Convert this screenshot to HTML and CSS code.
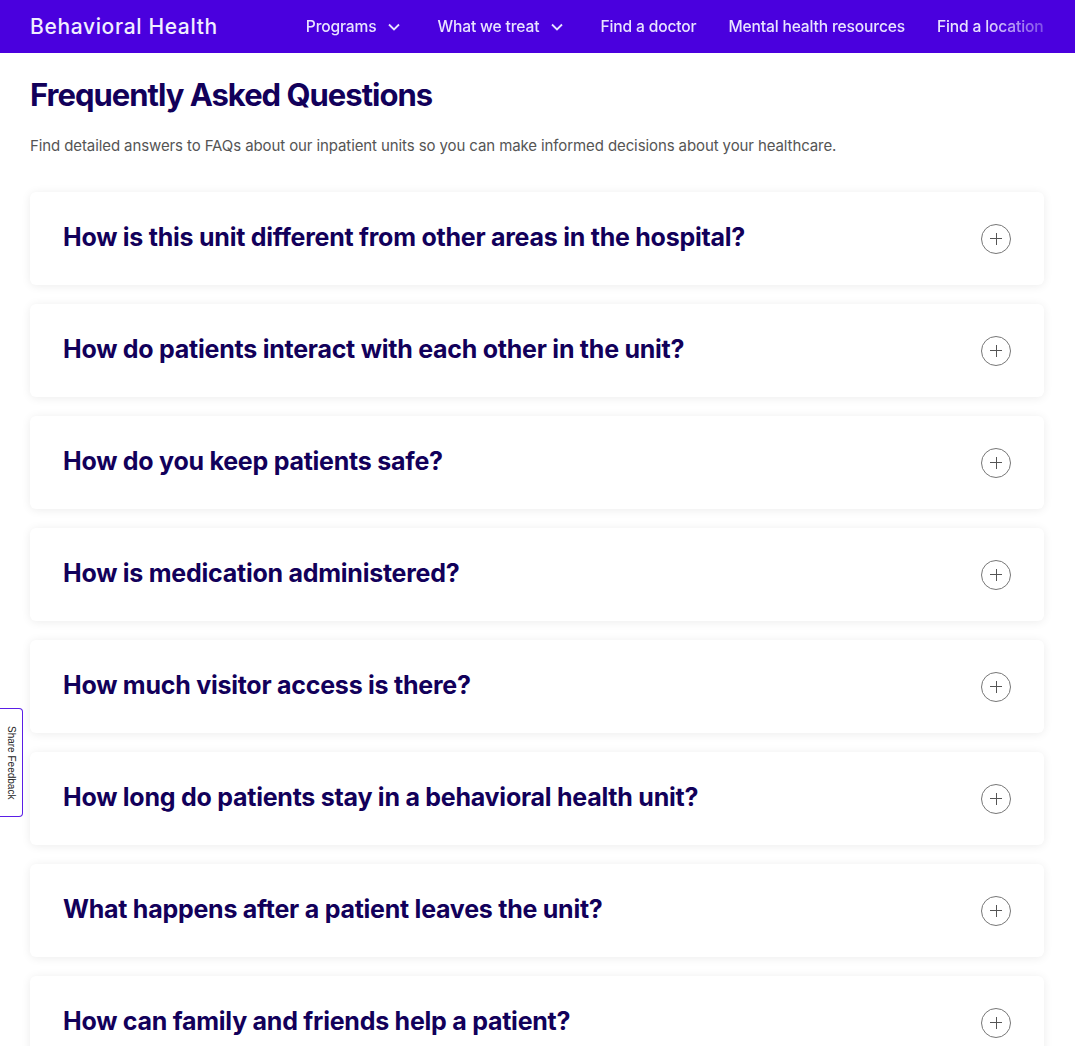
FILE: index.html
```html
<!DOCTYPE html>
<html lang="en">
<head>
    <meta charset="UTF-8">
    <meta name="viewport" content="width=device-width, initial-scale=1.0">
    <title>Behavioral Health - FAQ</title>
    <link rel="stylesheet" href="styles.css">
</head>
<body>
    <!-- Top bar -->
    <header class="topbar">
        <a class="brand" href="#">Behavioral Health</a>
        <nav class="nav">
            <a href="#" class="nav-item">Programs
                <svg class="chev" viewBox="0 0 14 14" width="14" height="14"><path d="M2 4.5l5 5 5-5" fill="none" stroke="currentColor" stroke-width="1.8"/></svg>
            </a>
            <a href="#" class="nav-item">What we treat
                <svg class="chev" viewBox="0 0 14 14" width="14" height="14"><path d="M2 4.5l5 5 5-5" fill="none" stroke="currentColor" stroke-width="1.8"/></svg>
            </a>
            <a href="#" class="nav-item">Find a doctor</a>
            <a href="#" class="nav-item">Mental health resources</a>
            <a href="#" class="nav-item">Find a location</a>
        </nav>
    </header>

    <main class="faq">
        <h1>Frequently Asked Questions</h1>
        <p class="intro">Find detailed answers to FAQs about our inpatient units so you can make informed decisions about your healthcare.</p>

        <div class="faq-list">
            <div class="faq-item">
                <h3>How is this unit different from other areas in the hospital?</h3>
                <span class="toggle"></span>
            </div>
            <div class="faq-item">
                <h3>How do patients interact with each other in the unit?</h3>
                <span class="toggle"></span>
            </div>
            <div class="faq-item">
                <h3>How do you keep patients safe?</h3>
                <span class="toggle"></span>
            </div>
            <div class="faq-item">
                <h3>How is medication administered?</h3>
                <span class="toggle"></span>
            </div>
            <div class="faq-item">
                <h3>How much visitor access is there?</h3>
                <span class="toggle"></span>
            </div>
            <div class="faq-item">
                <h3>How long do patients stay in a behavioral health unit?</h3>
                <span class="toggle"></span>
            </div>
            <div class="faq-item">
                <h3>What happens after a patient leaves the unit?</h3>
                <span class="toggle"></span>
            </div>
            <div class="faq-item">
                <h3>How can family and friends help a patient?</h3>
                <span class="toggle"></span>
            </div>
        </div>
    </main>

    <!-- Feedback tab -->
    <button class="feedback">Share Feedback</button>
</body>
</html>
```

FILE: styles.css
```css
body {
    margin: 0;
    padding: 0;
    font-family: Inter, "Noto Sans", sans-serif;
    background-color: #fff;
    color: #12005a;
}

.topbar {
    height: 53px;
    background-color: #4a00de;
    display: flex;
    align-items: center;
    padding: 0 0 0 30px;
    margin-right: 1px;
    overflow: hidden;
}

.brand {
    color: #f1eeff;
    text-decoration: none;
    font-size: 21px;
    font-weight: 500;
    letter-spacing: 0.65px;
    white-space: nowrap;
    margin-right: 88px;
}

.nav {
    display: flex;
    gap: 32px;
    flex: 1;
    overflow: hidden;
    white-space: nowrap;
    -webkit-mask-image: linear-gradient(to right, #000 88%, transparent 100%);
    mask-image: linear-gradient(to right, #000 88%, transparent 100%);
}

.nav-item {
    color: #e8e3ff;
    text-decoration: none;
    font-size: 15.6px;
    font-weight: 500;
    letter-spacing: -0.15px;
    display: flex;
    align-items: center;
    gap: 11px;
}

.chev {
    display: block;
    margin-right: 4px;
}

.faq {
    padding: 22px 32px 0 30px;
}

.faq h1 {
    margin: 0;
    font-size: 31px;
    font-weight: 700;
    letter-spacing: -1px;
    line-height: 40px;
}

.intro {
    margin: 20px 0 0;
    font-size: 15px;
    color: #555;
    line-height: 22px;
    letter-spacing: -0.1px;
}

.faq-list {
    margin-top: 35px;
    display: flex;
    flex-direction: column;
    gap: 19px;
}

.faq-item {
    height: 93px;
    box-sizing: border-box;
    background: #fff;
    border-radius: 6px;
    box-shadow: 0 1px 10px rgba(0, 0, 0, 0.08);
    display: flex;
    align-items: center;
    justify-content: space-between;
    padding: 0 33px;
}

.faq-item h3 {
    margin: 0 0 3px;
    font-size: 25px;
    font-weight: 700;
    letter-spacing: -0.25px;
}

.toggle {
    width: 30px;
    height: 30px;
    box-sizing: border-box;
    border: 1px solid #777;
    border-radius: 50%;
    position: relative;
    flex-shrink: 0;
}

.toggle::before,
.toggle::after {
    content: "";
    position: absolute;
    left: 50%;
    top: 50%;
    background: #555;
}

.toggle::before {
    width: 12px;
    height: 1px;
    margin: -0.5px 0 0 -6px;
}

.toggle::after {
    width: 1px;
    height: 12px;
    margin: -6px 0 0 -0.5px;
}

.feedback {
    position: fixed;
    left: 0;
    top: 708px;
    width: 23px;
    height: 109px;
    padding: 0;
    background: #fff;
    border: 1.5px solid #5a1ee6;
    border-left: none;
    border-radius: 0 4px 4px 0;
    writing-mode: vertical-rl;
    font-family: "Liberation Sans", Arial, sans-serif;
    font-size: 10px;
    color: #222;
    cursor: pointer;
}
```
